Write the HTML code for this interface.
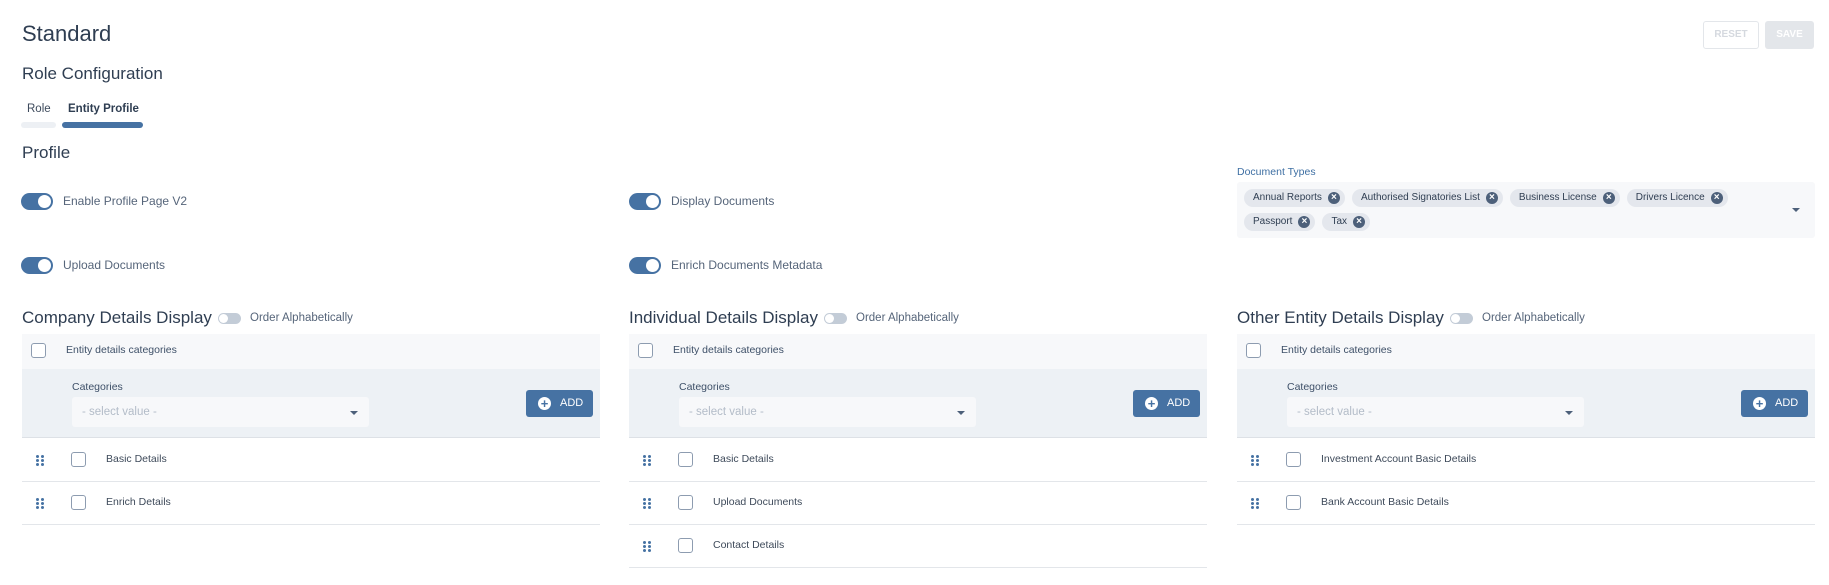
<!DOCTYPE html>
<html><head><meta charset="utf-8"><style>
*{box-sizing:border-box;margin:0;padding:0}
body{width:1829px;height:585px;background:#fff;font-family:"Liberation Sans",sans-serif;color:#3d4a5c;position:relative;overflow:hidden}
.a{position:absolute;white-space:nowrap}
.tg{position:absolute;width:32px;height:17px;border-radius:9px;background:#4672a3}
.tg:after{content:"";position:absolute;right:2px;top:2px;width:13px;height:13px;border-radius:50%;background:#fff}
.tl{position:absolute;font-size:12px;color:#56657a;white-space:nowrap}
.st{position:absolute;width:23px;height:11px;border-radius:6px;background:#c3ccd7}
.st:after{content:"";position:absolute;left:1px;top:1px;width:9px;height:9px;border-radius:50%;background:#fff}
.cb{position:absolute;width:15px;height:15px;border:1.5px solid #8d9cb0;border-radius:3px;background:#fff}
.chips{position:absolute;left:1244px;top:189px;width:540px;display:flex;flex-wrap:wrap;gap:0 7px}
.chip{position:relative;height:18px;margin-bottom:6px;border-radius:9px;background:#e4e7ed;font-size:10px;color:#2f3e52;padding:0 23px 0 9px;line-height:18px;white-space:nowrap}
.chip i{position:absolute;right:5px;top:3px;width:12px;height:12px;border-radius:50%;background:#4d607a;color:#fff;font-style:normal;font-size:10px;line-height:12px;text-align:center;font-weight:bold}
.br{flex-basis:100%;height:0}
.drag{position:absolute;width:3px;height:3px;border-radius:50%;background:#4672a3}
</style></head><body>
<div class="a" style="left:22px;top:21px;font-size:22px;color:#2f3e52">Standard</div>
<div style="position:absolute;left:1703px;top:21px;width:56px;height:28px;border:1px solid #e3e6ea;border-radius:3px;font-size:10px;color:#d5d9df;text-align:center;line-height:26px;font-weight:bold">RESET</div>
<div style="position:absolute;left:1765px;top:21px;width:49px;height:28px;background:#e3e6ea;border-radius:3px;font-size:10px;color:#fff;text-align:center;line-height:28px;font-weight:bold">SAVE</div>
<div class="a" style="left:22px;top:64px;font-size:17px;color:#2f3e52">Role Configuration</div>
<div class="a" style="left:27px;top:103px;font-size:11.5px;color:#3d4a5c">Role</div>
<div class="a" style="left:68px;top:103px;font-size:11.5px;font-weight:bold;color:#2f3e52">Entity Profile</div>
<div style="position:absolute;left:21px;top:122px;width:35px;height:6px;border-radius:3px;background:#edf0f4"></div>
<div style="position:absolute;left:62px;top:122px;width:81px;height:6px;border-radius:3px;background:#4672a3"></div>
<div class="a" style="left:22px;top:143px;font-size:17px;color:#2f3e52">Profile</div>

<div class="tg" style="left:21px;top:193px"></div><div class="tl" style="left:63px;top:194px">Enable Profile Page V2</div>
<div class="tg" style="left:21px;top:257px"></div><div class="tl" style="left:63px;top:258px">Upload Documents</div>
<div class="tg" style="left:629px;top:193px"></div><div class="tl" style="left:671px;top:194px">Display Documents</div>
<div class="tg" style="left:629px;top:257px"></div><div class="tl" style="left:671px;top:258px">Enrich Documents Metadata</div>

<div class="a" style="left:1237px;top:166px;font-size:10.5px;color:#3e6fa3">Document Types</div>
<div style="position:absolute;left:1237px;top:182px;width:578px;height:56px;background:#f7f8fa;border-radius:3px"></div>
<div class="chips">
<div class="chip">Annual Reports<i>×</i></div>
<div class="chip">Authorised Signatories List<i>×</i></div>
<div class="chip">Business License<i>×</i></div>
<div class="chip">Drivers Licence<i>×</i></div>
<div class="br"></div>
<div class="chip">Passport<i>×</i></div>
<div class="chip">Tax<i>×</i></div>
</div>
<div style="position:absolute;left:1792px;top:208px;border-left:4px solid transparent;border-right:4px solid transparent;border-top:4px solid #4d607a"></div>

<div id="c1"></div>
<script>
var cols=[[22,"Company Details Display",["Basic Details","Enrich Details"]],[629,"Individual Details Display",["Basic Details","Upload Documents","Contact Details"]],[1237,"Other Entity Details Display",["Investment Account Basic Details","Bank Account Basic Details"]]];
var h="";
cols.forEach(function(c){var x=c[0];
h+='<div class="a" style="left:'+x+'px;top:308px;font-size:17px;color:#2f3e52" id="t'+x+'">'+c[1]+'</div>';
h+='<div style="position:absolute;left:'+x+'px;top:334px;width:578px;height:35px;background:#f7f8fa"></div>';
h+='<div class="cb" style="left:'+(x+9)+'px;top:343px"></div>';
h+='<div class="a" style="left:'+(x+44)+'px;top:344px;font-size:10.5px;color:#3e5068">Entity details categories</div>';
h+='<div style="position:absolute;left:'+x+'px;top:369px;width:578px;height:69px;background:#edf1f5;border-bottom:1px solid #dde1e6"></div>';
h+='<div class="a" style="left:'+(x+50)+'px;top:381px;font-size:10.5px;color:#3e5068">Categories</div>';
h+='<div style="position:absolute;left:'+(x+50)+'px;top:397px;width:297px;height:30px;background:#f7f8fa;border-radius:3px"></div>';
h+='<div class="a" style="left:'+(x+60)+'px;top:406px;font-size:11.5px;color:#b3bcc8">- select value -</div>';
h+='<div style="position:absolute;left:'+(x+328)+'px;top:411px;border-left:4px solid transparent;border-right:4px solid transparent;border-top:4px solid #4d607a"></div>';
h+='<div style="position:absolute;left:'+(x+504)+'px;top:390px;width:67px;height:27px;background:#4672a3;border-radius:3px;color:#fff;font-size:11px;line-height:27px"><span style="position:absolute;left:12px;top:7px;width:13px;height:13px;border-radius:50%;background:#fff;color:#4672a3;font-weight:bold;font-size:13px;line-height:13px;text-align:center">+</span><span style="position:absolute;left:34px">ADD</span></div>';
c[2].forEach(function(r,i){var y=439+i*43;
h+='<div style="position:absolute;left:'+x+'px;top:'+y+'px;width:578px;height:43px;border-bottom:1.5px solid #e3e6ea"></div>';
var dx=x+14,dy=y+16;
[[0,0],[5,0],[0,4],[5,4],[0,8],[5,8]].forEach(function(p){h+='<div class="drag" style="left:'+(dx+p[0])+'px;top:'+(dy+p[1])+'px"></div>'});
h+='<div class="cb" style="left:'+(x+49)+'px;top:'+(y+13)+'px"></div>';
h+='<div class="a" style="left:'+(x+84)+'px;top:'+(y+14)+'px;font-size:10.5px;color:#3e4a5a">'+r+'</div>';
});
});
document.getElementById("c1").innerHTML=h;
cols.forEach(function(c){var x=c[0];var t=document.getElementById("t"+x);var w=t.offsetWidth;
var s=document.createElement("div");s.className="st";s.style.left=(x+w+6)+"px";s.style.top="313px";document.body.appendChild(s);
var l=document.createElement("div");l.className="a";l.style.cssText="left:"+(x+w+38)+"px;top:312px;font-size:11.5px;color:#56657a";l.textContent="Order Alphabetically";document.body.appendChild(l);});
</script>
</body></html>
